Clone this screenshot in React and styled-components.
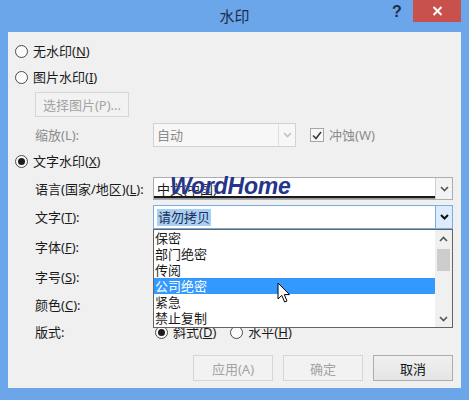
import React from 'react';
import styled, { createGlobalStyle } from 'styled-components';

const Global = createGlobalStyle`
  html, body { margin: 0; padding: 0; width: 469px; height: 400px; overflow: hidden; background: #6ba6ea; }
  body {
    font-family: "Noto Sans", "Noto Sans CJK SC", sans-serif;
    font-size: 13px;
    color: #1a1a1a;
    text-autospace: no-autospace;
    text-spacing-trim: space-all;
  }
  #root { width: 469px; height: 400px; }
`;

const Window = styled.div`
  width: 469px;
  height: 400px;
  background: #6ba6ea;
  display: flex;
  flex-direction: column;
  position: relative;
`;

const TitleBar = styled.div`
  height: 32px;
  flex: none;
  position: relative;
  display: flex;
  align-items: center;
  justify-content: center;
`;

const Title = styled.div`
  font-size: 15px;
  line-height: 20px;
  color: #1c2d4c;
`;

const Help = styled.div`
  position: absolute;
  left: 392px;
  top: 3px;
  font-family: "Liberation Sans", sans-serif;
  font-weight: bold;
  font-size: 16px;
  line-height: 18px;
  color: #1c2d4c;
`;

const Close = styled.div`
  position: absolute;
  right: 8px;
  top: 0;
  width: 48px;
  height: 22px;
  background: #c9514b;
  display: flex;
  align-items: center;
  justify-content: center;
`;

const Panel = styled.div`
  margin: 0 8px;
  height: 356px;
  background: #f0f0f0;
  display: flex;
  flex-direction: column;
  padding-left: 7px;
  box-sizing: border-box;
  position: relative;
`;

const Row = styled.div`
  display: flex;
  align-items: center;
  flex: none;
  height: ${p => p.$h || 22}px;
  margin-top: ${p => p.$mt || 0}px;
  padding-left: ${p => (p.$indent ? 20 : 0)}px;
  line-height: 16px;
  position: relative;
  z-index: ${p => p.$z || 'auto'};
`;

const RadioDot = styled.span`
  width: 11px;
  height: 11px;
  border: 1px solid #4a4a4a;
  border-radius: 50%;
  background: #fbfbfb;
  display: inline-flex;
  align-items: center;
  justify-content: center;
  flex: none;
  &::after {
    content: '';
    width: 7px;
    height: 7px;
    border-radius: 50%;
    background: #1c1c1c;
    display: ${p => (p.$on ? 'block' : 'none')};
  }
`;

const Choice = styled.label`
  display: inline-flex;
  align-items: center;
  gap: 5px;
  margin-left: ${p => p.$ml || 0}px;
  color: ${p => (p.$disabled ? '#8c8c8c' : '#1a1a1a')};
  white-space: nowrap;
`;

const ChoiceText = styled.span`
  white-space: nowrap;
`;

const Label = styled.div`
  width: 118px;
  flex: none;
  color: ${p => (p.$disabled ? '#8c8c8c' : '#1a1a1a')};
  white-space: nowrap;
`;

const PlainButton = styled.div`
  width: ${p => p.$w || 80}px;
  height: ${p => p.$h || 26}px;
  box-sizing: border-box;
  border: 1px solid ${p => (p.$disabled ? '#d6d6d6' : '#acacac')};
  background: ${p => (p.$disabled ? '#f2f2f2' : 'linear-gradient(#f0f0f0, #e5e5e5)')};
  color: ${p => (p.$disabled ? '#a3a3a3' : '#111')};
  display: flex;
  align-items: center;
  justify-content: center;
  white-space: nowrap;
`;

const Combo = styled.div`
  width: ${p => p.$w}px;
  height: ${p => p.$h || 24}px;
  box-sizing: border-box;
  border: 1px solid ${p => p.$border || '#abadb3'};
  background: ${p => p.$bg || '#fff'};
  display: flex;
  align-items: stretch;
  position: relative;
`;

const ComboText = styled.div`
  flex: 1;
  display: flex;
  align-items: center;
  padding-left: 3px;
  color: ${p => p.$color || '#1a1a1a'};
  overflow: hidden;
  white-space: nowrap;
`;

const Selected = styled.span`
  background: #a9cff2;
  color: #1c2f5a;
  padding: 0 1px;
  line-height: 17px;
`;

const ArrowBtn = styled.div`
  width: 17px;
  flex: none;
  display: flex;
  align-items: center;
  justify-content: center;
  box-sizing: border-box;
  border-left: 1px solid ${p => p.$border || 'transparent'};
  background: ${p => p.$bg || 'transparent'};
`;

const Check = styled.span`
  width: 12px;
  height: 12px;
  border: 1px solid #a6a6a6;
  background: #f7f7f7;
  display: inline-flex;
  align-items: center;
  justify-content: center;
  flex: none;
`;

const Watermark = styled.div`
  position: absolute;
  left: 16px;
  top: -6px;
  font-family: "Liberation Sans", sans-serif;
  font-weight: bold;
  font-style: italic;
  font-size: 23px;
  line-height: 28px;
  color: #24358a;
  letter-spacing: -0.2px;
  text-shadow: 0 0 1px #fff;
  pointer-events: none;
`;

const Rule = styled.div`
  position: absolute;
  left: 0;
  width: 281px;
  top: ${p => p.$top}px;
  height: ${p => p.$h}px;
  background: ${p => p.$c};
`;

const List = styled.div`
  position: absolute;
  left: -1px;
  top: 23px;
  width: 300px;
  height: 99px;
  box-sizing: border-box;
  border: 1px solid #646464;
  background: #fff;
  z-index: 5;
  display: flex;
`;

const Items = styled.div`
  flex: 1;
  display: flex;
  flex-direction: column;
`;

const Item = styled.div`
  height: 16px;
  line-height: 16px;
  padding-left: 1px;
  background: ${p => (p.$active ? '#3399ff' : 'transparent')};
  color: ${p => (p.$active ? '#fff' : '#1a1a1a')};
  white-space: nowrap;
`;

const ScrollBar = styled.div`
  width: 17px;
  flex: none;
  background: #f0f0f0;
  display: flex;
  flex-direction: column;
  align-items: center;
`;

const ScrollArrow = styled.div`
  height: 17px;
  width: 17px;
  display: flex;
  align-items: center;
  justify-content: center;
  flex: none;
`;

const Thumb = styled.div`
  width: 13px;
  height: 22px;
  background: #cdcdcd;
  margin-top: 2px;
`;

const ScrollFill = styled.div`
  flex: 1;
`;

const Footer = styled.div`
  display: flex;
  justify-content: flex-end;
  gap: 10px;
  padding-right: 8px;
  margin-top: 12px;
`;

const Cursor = styled.svg`
  position: absolute;
  left: 277px;
  top: 282px;
  z-index: 10;
`;

const U = styled.u`
  text-underline-offset: 1px;
`;

const Chevron = ({ dir = 'down', color = '#333', w = 1.6 }) => (
  <svg width="9" height="6" viewBox="0 0 9 6">
    <path
      d={dir === 'down' ? 'M1 1 L4.5 4.5 L8 1' : 'M1 5 L4.5 1.5 L8 5'}
      fill="none"
      stroke={color}
      strokeWidth={w}
    />
  </svg>
);

const Mn = ({ pre, k, post = ')' }) => (
  <ChoiceText>
    {pre}(<U>{k}</U>{post}
  </ChoiceText>
);

export default function App() {
  const items = ['保密', '部门绝密', '传阅', '公司绝密', '紧急', '禁止复制'];
  return (
    <>
      <Global />
      <Window>
        <TitleBar>
          <Title>水印</Title>
          <Help>?</Help>
          <Close>
            <svg width="11" height="10" viewBox="0 0 11 10">
              <path d="M1.5 1 L9.5 9 M9.5 1 L1.5 9" stroke="#fff" strokeWidth="2" />
            </svg>
          </Close>
        </TitleBar>
        <Panel>
          <Row $mt={8}>
            <Choice><RadioDot /><Mn pre="无水印" k="N" /></Choice>
          </Row>
          <Row $mt={4}>
            <Choice><RadioDot /><Mn pre="图片水印" k="I" /></Choice>
          </Row>
          <Row $mt={4} $h={25} $indent>
            <PlainButton $w={94} $h={25} $disabled>选择图片(P)...</PlainButton>
          </Row>
          <Row $mt={6} $h={24} $indent>
            <Label $disabled>缩放(L):</Label>
            <Combo $w={143} $border="#d2d2d2" $bg="#f7f7f7">
              <ComboText $color="#8c8c8c">自动</ComboText>
              <ArrowBtn $border="#e0e0e0">
                <Chevron color="#c2c2c2" />
              </ArrowBtn>
            </Combo>
            <Choice $ml={14} $disabled>
              <Check>
                <svg width="10" height="9" viewBox="0 0 10 9">
                  <path d="M1 4.5 L4 7.5 L9 1" fill="none" stroke="#3a3a3a" strokeWidth="1.6" />
                </svg>
              </Check>
              冲蚀(W)
            </Choice>
          </Row>
          <Row $mt={3}>
            <Choice><RadioDot $on /><Mn pre="文字水印" k="X" /></Choice>
          </Row>
          <Row $mt={5} $h={23} $indent>
            <Label><Mn pre="语言(国家/地区)" k="L" post="):" /></Label>
            <Combo $w={300} $h={23}>
              <ComboText>中文(中国)</ComboText>
              <Rule $top={18} $h={2} $c="#1a1a1a" />
              <Rule $top={20} $h={1} $c="#9a9a9a" />
              <Watermark>WordHome</Watermark>
              <ArrowBtn $border="#d0d0d0" $bg="#f3f3f3">
                <Chevron color="#555" />
              </ArrowBtn>
            </Combo>
          </Row>
          <Row $mt={5} $h={24} $indent $z={5}>
            <Label><Mn pre="文字" k="T" post="):" /></Label>
            <Combo $w={300} $border="#7aaee3">
              <ComboText><Selected>请勿拷贝</Selected></ComboText>
              <ArrowBtn $border="#7aaee3" $bg="#dcecfc">
                <Chevron color="#111" w={2} />
              </ArrowBtn>
              <List>
                <Items>
                  {items.map(t => (
                    <Item key={t} $active={t === '公司绝密'}>{t}</Item>
                  ))}
                </Items>
                <ScrollBar>
                  <ScrollArrow><Chevron dir="up" color="#555" /></ScrollArrow>
                  <Thumb />
                  <ScrollFill />
                  <ScrollArrow><Chevron color="#555" /></ScrollArrow>
                </ScrollBar>
              </List>
            </Combo>
          </Row>
          <Row $mt={7} $indent>
            <Label><Mn pre="字体" k="F" post="):" /></Label>
          </Row>
          <Row $mt={8} $indent>
            <Label><Mn pre="字号" k="S" post="):" /></Label>
          </Row>
          <Row $mt={6} $indent>
            <Label><Mn pre="颜色" k="C" post="):" /></Label>
          </Row>
          <Row $mt={5} $indent>
            <Label>版式:</Label>
            <Choice $ml={2}><RadioDot $on /><Mn pre="斜式" k="D" /></Choice>
            <Choice $ml={14}><RadioDot /><Mn pre="水平" k="H" /></Choice>
          </Row>
          <Footer>
            <PlainButton $disabled>应用(A)</PlainButton>
            <PlainButton $disabled>确定</PlainButton>
            <PlainButton>取消</PlainButton>
          </Footer>
        </Panel>
        <Cursor width="14" height="22" viewBox="0 0 14 22">
          <path
            d="M1 1 L1 17 L4.8 13.4 L7.6 20 L10 19 L7.3 12.6 L12.5 12.6 Z"
            fill="#fff"
            stroke="#000"
            strokeWidth="1"
            strokeLinejoin="round"
          />
        </Cursor>
      </Window>
    </>
  );
}
